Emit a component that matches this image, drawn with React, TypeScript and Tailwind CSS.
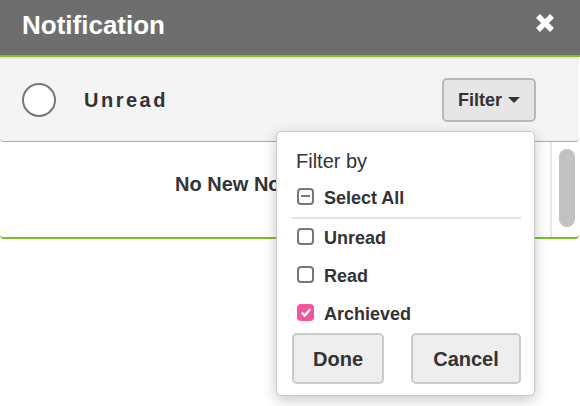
import { useState } from 'react';

function CloseIcon() {
  return (
    <svg viewBox="0 0 20 20" className="w-5 h-5">
      <path d="M3 3 L17 17 M17 3 L3 17" stroke="white" strokeWidth="5.5" />
    </svg>
  );
}

function Caret() {
  return (
    <svg viewBox="0 0 12 6" className="w-[12px] h-[6px]">
      <polygon points="0,0 12,0 6,6" fill="#333" />
    </svg>
  );
}

function Box({ state }: { state: 'on' | 'off' | 'some' }) {
  if (state === 'on') {
    return (
      <span className="mb-[4px] w-[17px] h-[17px] rounded-[4px] bg-[#f2579d] flex items-center justify-center">
        <svg viewBox="0 0 16 16" className="w-[14px] h-[14px]">
          <path d="M3 8.5 L6.5 12 L13 4.5" stroke="white" strokeWidth="2.6" fill="none" />
        </svg>
      </span>
    );
  }
  return (
    <span className="mb-[4px] w-[17px] h-[17px] rounded-[4px] border-2 border-[#777] bg-white flex items-center justify-center">
      {state === 'some' && <span className="w-[9px] h-[2px] bg-[#777]" />}
    </span>
  );
}

function Option({ label, state, cls }: { label: string; state: 'on' | 'off' | 'some'; cls: string }) {
  return (
    <label className={`h-[20px] pl-[5px] flex items-center gap-[10px] ${cls}`}>
      <Box state={state} />
      <span className="text-[18px] leading-none font-bold text-[#333]">{label}</span>
    </label>
  );
}

export default function App() {
  const [open] = useState(true);

  return (
    <div className="relative w-[580px] h-[406px] overflow-hidden bg-white font-['Liberation_Sans',Arial,sans-serif]">
      <header className="h-[55px] bg-[#6e6e6e] flex justify-between pl-[22px] pr-[25px]">
        <h1 className="mt-[12px] text-[26px] leading-none font-bold text-white">Notification</h1>
        <div className="mt-[13px]">
          <CloseIcon />
        </div>
      </header>
      <div className="h-[2px] bg-[#7cbf2b]" />

      <div className="mr-[1px] h-[85px] bg-[#f4f4f4] border-t-2 border-t-[#e3e3e3] border-b border-b-[#a8a8a8] rounded-b-[4px] flex items-center pl-[22px] pr-[43px]">
        <span className="w-[34px] h-[34px] rounded-full border-2 border-[#777] bg-white" />
        <span className="ml-[28px] text-[20px] leading-none font-bold tracking-[2.5px] text-[#333]">Unread</span>
        <button className="ml-auto w-[94px] h-[44px] rounded-[5px] border-2 border-[#b9b9b9] bg-[#e6e6e6] flex items-center justify-center gap-[6px]">
          <span className="text-[18px] leading-none font-bold text-[#333]">Filter</span>
          <Caret />
        </button>
      </div>

      <div className="mr-[1px] h-[97px] border-b-2 border-[#7cbf2b] rounded-b-[4px] flex">
        <div className="flex-1 pt-[32px] text-center text-[20px] leading-none font-bold text-[#333]">
          No New Notifications
        </div>
        <div className="w-[29px] border-l-2 border-[#e6e6e6] pl-[7px] pt-[7px]">
          <div className="w-[16px] h-[78px] rounded-full bg-[#c2c2c2]" />
        </div>
      </div>

      {open && (
        <div className="absolute left-[276px] top-[131px] w-[259px] h-[265px] rounded-[5px] border border-[#c9c9c9] bg-white shadow-[0_4px_14px_rgba(0,0,0,0.22)] pl-[15px] pr-[13px] pt-[19px] flex flex-col">
          <div className="pl-[4px] text-[20px] leading-none text-[#333]">Filter by</div>
          <Option label="Select All" state="some" cls="mt-[17px]" />
          <div className="mt-[9px] h-[2px] bg-[#e4e4e4]" />
          <Option label="Unread" state="off" cls="mt-[9px]" />
          <Option label="Read" state="off" cls="mt-[18px]" />
          <Option label="Archieved" state="on" cls="mt-[18px]" />
          <div className="mt-[9px] flex justify-between">
            <button className="w-[92px] h-[51px] rounded-[5px] border-2 border-[#cacaca] bg-[#eeeeee] text-[20px] font-bold text-[#333]">
              Done
            </button>
            <button className="w-[110px] h-[51px] rounded-[5px] border-2 border-[#cacaca] bg-[#eeeeee] text-[20px] font-bold text-[#333]">
              Cancel
            </button>
          </div>
        </div>
      )}
    </div>
  );
}
